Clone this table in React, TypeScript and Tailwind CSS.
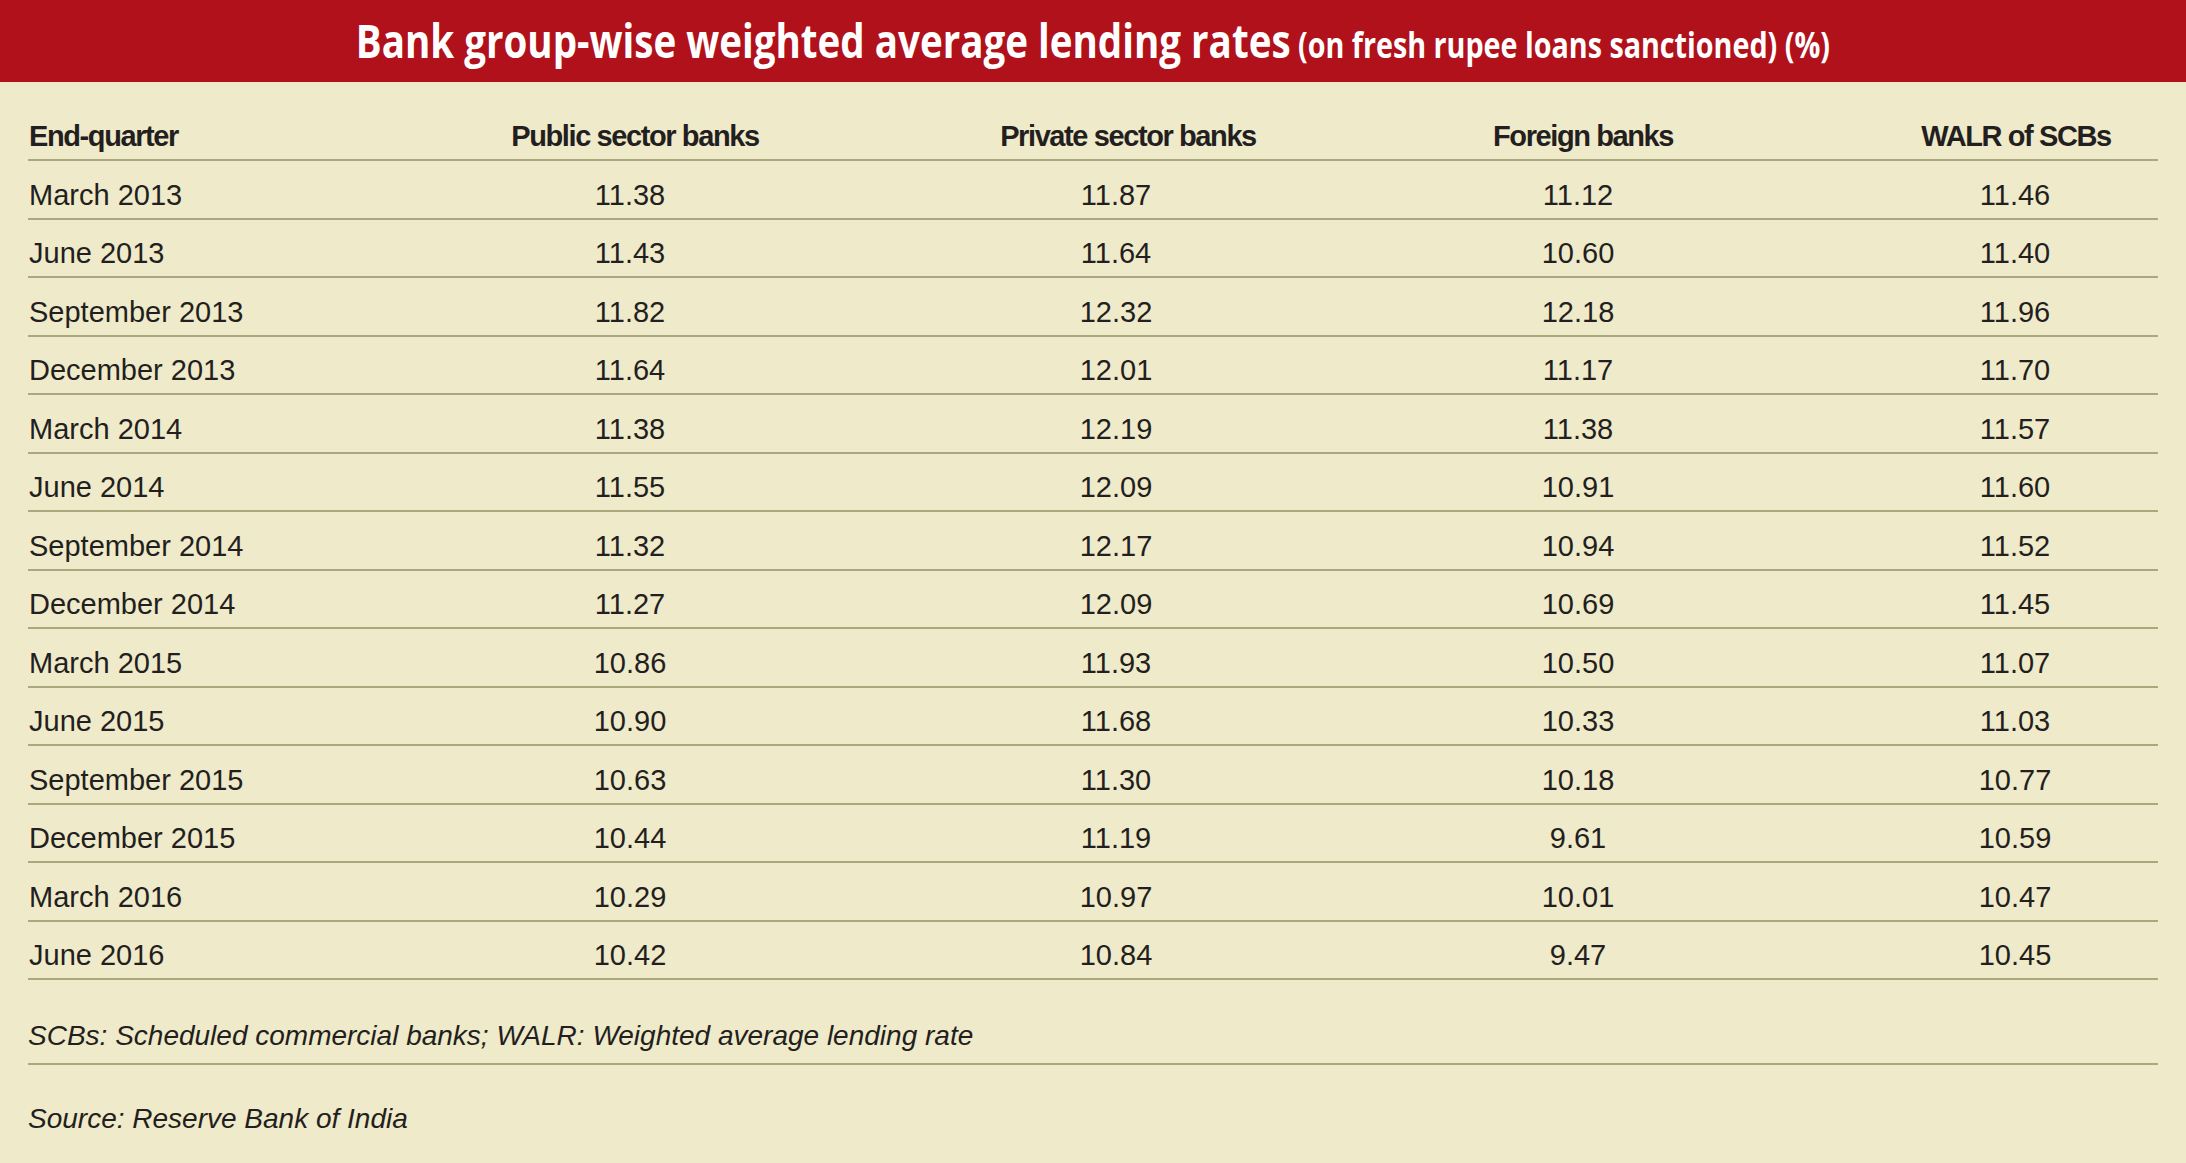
import React from 'react';

const rows = [
  ['March 2013', '11.38', '11.87', '11.12', '11.46'],
  ['June 2013', '11.43', '11.64', '10.60', '11.40'],
  ['September 2013', '11.82', '12.32', '12.18', '11.96'],
  ['December 2013', '11.64', '12.01', '11.17', '11.70'],
  ['March 2014', '11.38', '12.19', '11.38', '11.57'],
  ['June 2014', '11.55', '12.09', '10.91', '11.60'],
  ['September 2014', '11.32', '12.17', '10.94', '11.52'],
  ['December 2014', '11.27', '12.09', '10.69', '11.45'],
  ['March 2015', '10.86', '11.93', '10.50', '11.07'],
  ['June 2015', '10.90', '11.68', '10.33', '11.03'],
  ['September 2015', '10.63', '11.30', '10.18', '10.77'],
  ['December 2015', '10.44', '11.19', '9.61', '10.59'],
  ['March 2016', '10.29', '10.97', '10.01', '10.47'],
  ['June 2016', '10.42', '10.84', '9.47', '10.45'],
];

const grid = 'grid grid-cols-[277px_660px_326px_584px_282px]';

export default function App() {
  return (
    <div className="w-[2186px] h-[1163px] bg-[#efeac9] text-[#231f20] font-['Liberation_Sans',Arial,sans-serif] overflow-hidden">
      {/* title band */}
      <div className="h-[82px] bg-[#b0111a] flex items-center justify-center">
        <div className="scale-x-[0.82] whitespace-nowrap text-white font-bold font-['Open_Sans',sans-serif] pt-[2px]">
          <span className="text-[47px] leading-[60px]">Bank group-wise weighted average lending rates</span>
          <span className="text-[35px] leading-[60px]"> (on fresh rupee loans sanctioned) (%)</span>
        </div>
      </div>

      <div className="px-[28px]">
        {/* header row */}
        <div className={`${grid} h-[79px] border-b-2 border-[#aca87d] items-end pb-[6px] text-[29px] leading-[33px] font-bold tracking-[-1.4px]`}>
          <div className="pl-[1px]">End-quarter</div>
          <div className="text-center">Public sector banks</div>
          <div className="text-center">Private sector banks</div>
          <div className="text-center">Foreign banks</div>
          <div className="text-center">WALR of SCBs</div>
        </div>

        {rows.map((r, i) => (
          <div key={i} className={`${grid} h-[58.5px] border-b-2 border-[#aca87d] items-center pt-[12px] text-[29px] leading-[33px]`}>
            <div className="pl-[1px]">{r[0]}</div>
            <div className="text-center pr-[10px]">{r[1]}</div>
            <div className="text-center pr-[24px]">{r[2]}</div>
            <div className="text-center pr-[10px]">{r[3]}</div>
            <div className="text-center pr-[2px]">{r[4]}</div>
          </div>
        ))}

        {/* notes */}
        <div className="border-b-2 border-[#aca87d] pt-[40px] pb-[11px] text-[28px] leading-[32px] italic">
          SCBs: Scheduled commercial banks; WALR: Weighted average lending rate
        </div>
        <div className="pt-[38px] text-[28px] leading-[32px] italic">
          Source: Reserve Bank of India
        </div>
      </div>
    </div>
  );
}
